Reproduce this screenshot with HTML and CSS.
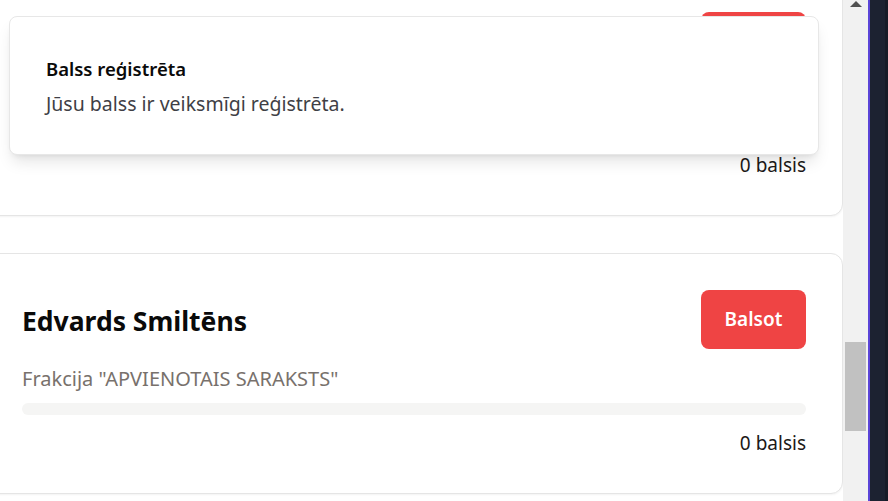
FILE: index.html
```html
<!DOCTYPE html>
<html lang="lv">
<head>
<meta charset="utf-8">
<title>Balsošana</title>
<link rel="stylesheet" href="styles.css">
</head>
<body>
<div class="window">
  <main class="viewport">
    <div class="list">
      <section class="card">
        <div class="card-head">
          <h2 class="name"></h2>
          <button class="vote">Balsot</button>
        </div>
        <p class="faction"></p>
        <div class="bar"></div>
        <p class="count">0 balsis</p>
      </section>
      <section class="card">
        <div class="card-head">
          <h2 class="name">Edvards Smiltēns</h2>
          <button class="vote">Balsot</button>
        </div>
        <p class="faction">Frakcija "APVIENOTAIS SARAKSTS"</p>
        <div class="bar"></div>
        <p class="count">0 balsis</p>
      </section>
    </div>
    <div class="toast" role="status">
      <div class="toast-title">Balss reģistrēta</div>
      <div class="toast-desc">Jūsu balss ir veiksmīgi reģistrēta.</div>
    </div>
  </main>
  <div class="scrollbar">
    <span class="arrow"></span>
    <div class="track"><div class="thumb"></div></div>
  </div>
  <div class="edge"><div class="edge-line"></div><div class="edge-fill"></div><div class="edge-dark"></div></div>
</div>
</body>
</html>
```
FILE: styles.css
```css
* { box-sizing: border-box; }
html, body { margin: 0; padding: 0; height: 100%; }
body {
  font-family: "Noto Sans", "Open Sans", sans-serif;
  background: #ffffff;
  color: #1c1917;
  overflow: hidden;
}
.window {
  display: flex;
  width: 888px;
  height: 501px;
}
.viewport {
  position: relative;
  width: 843px;
  flex: none;
  height: 501px;
  overflow: hidden;
  background: #ffffff;
}
.list {
  display: flex;
  flex-direction: column;
  gap: 37px;
  margin-top: -25px;
  margin-left: -15px;
}
.card {
  border: 1px solid #e5e5e5;
  border-radius: 12px;
  background: #fff;
  padding: 36px;
  box-shadow: 0 1px 2px rgba(0,0,0,0.05);
}
.card-head {
  display: flex;
  align-items: center;
  justify-content: space-between;
  height: 59px;
}
.name {
  margin: 0;
  font-size: 26.5px;
  font-weight: 700;
  color: #0a0a0a;
  line-height: 34px;
  padding-top: 3px;
}
.vote {
  font-family: inherit;
  border: none;
  background: #ef4444;
  color: #fff;
  font-size: 19px;
  font-weight: 600;
  line-height: 27px;
  padding: 0;
  width: 105px;
  height: 59px;
  border-radius: 8px;
}
.faction {
  margin: 16px 0 0;
  font-size: 20px;
  line-height: 28px;
  min-height: 28px;
  color: #78716c;
}
.bar {
  margin-top: 10px;
  height: 12px;
  border-radius: 6px;
  background: #f5f5f4;
}
.count {
  margin: 14px 0 0;
  font-size: 19px;
  line-height: 28px;
  text-align: right;
  color: #1c1917;
}
.toast {
  position: absolute;
  left: 9px;
  top: 16px;
  width: 810px;
  height: 139px;
  background: #fff;
  border: 1px solid #e7e7e7;
  border-radius: 8px;
  padding: 39px 36px 0;
  box-shadow: 0 10px 15px -3px rgba(0,0,0,0.1), 0 4px 6px -4px rgba(0,0,0,0.1);
}
.toast-title {
  font-size: 18.5px;
  line-height: 26px;
  font-weight: 600;
  color: #0a0a0a;
}
.toast-desc {
  margin-top: 8px;
  font-size: 19.5px;
  line-height: 28px;
  color: #3f3f46;
}
.scrollbar {
  position: relative;
  flex: none;
  width: 25px;
  height: 501px;
  background: #f1f1f1;
  display: flex;
  flex-direction: column;
}
.arrow {
  width: 0;
  height: 0;
  margin: 1px auto 0;
  border-left: 6px solid transparent;
  border-right: 6px solid transparent;
  border-bottom: 6px solid #505050;
}
.track {
  flex: 1;
  padding-top: 335px;
}
.thumb {
  margin-left: 2px;
  width: 21px;
  height: 89px;
  background: #c1c1c1;
}
.edge {
  flex: 1;
  display: flex;
  height: 501px;
}
.edge-line { width: 2px; background: #5b45d8; }
.edge-fill { flex: 1; background: #1c2231; }
.edge-dark { width: 3px; background: #161b27; }
```
